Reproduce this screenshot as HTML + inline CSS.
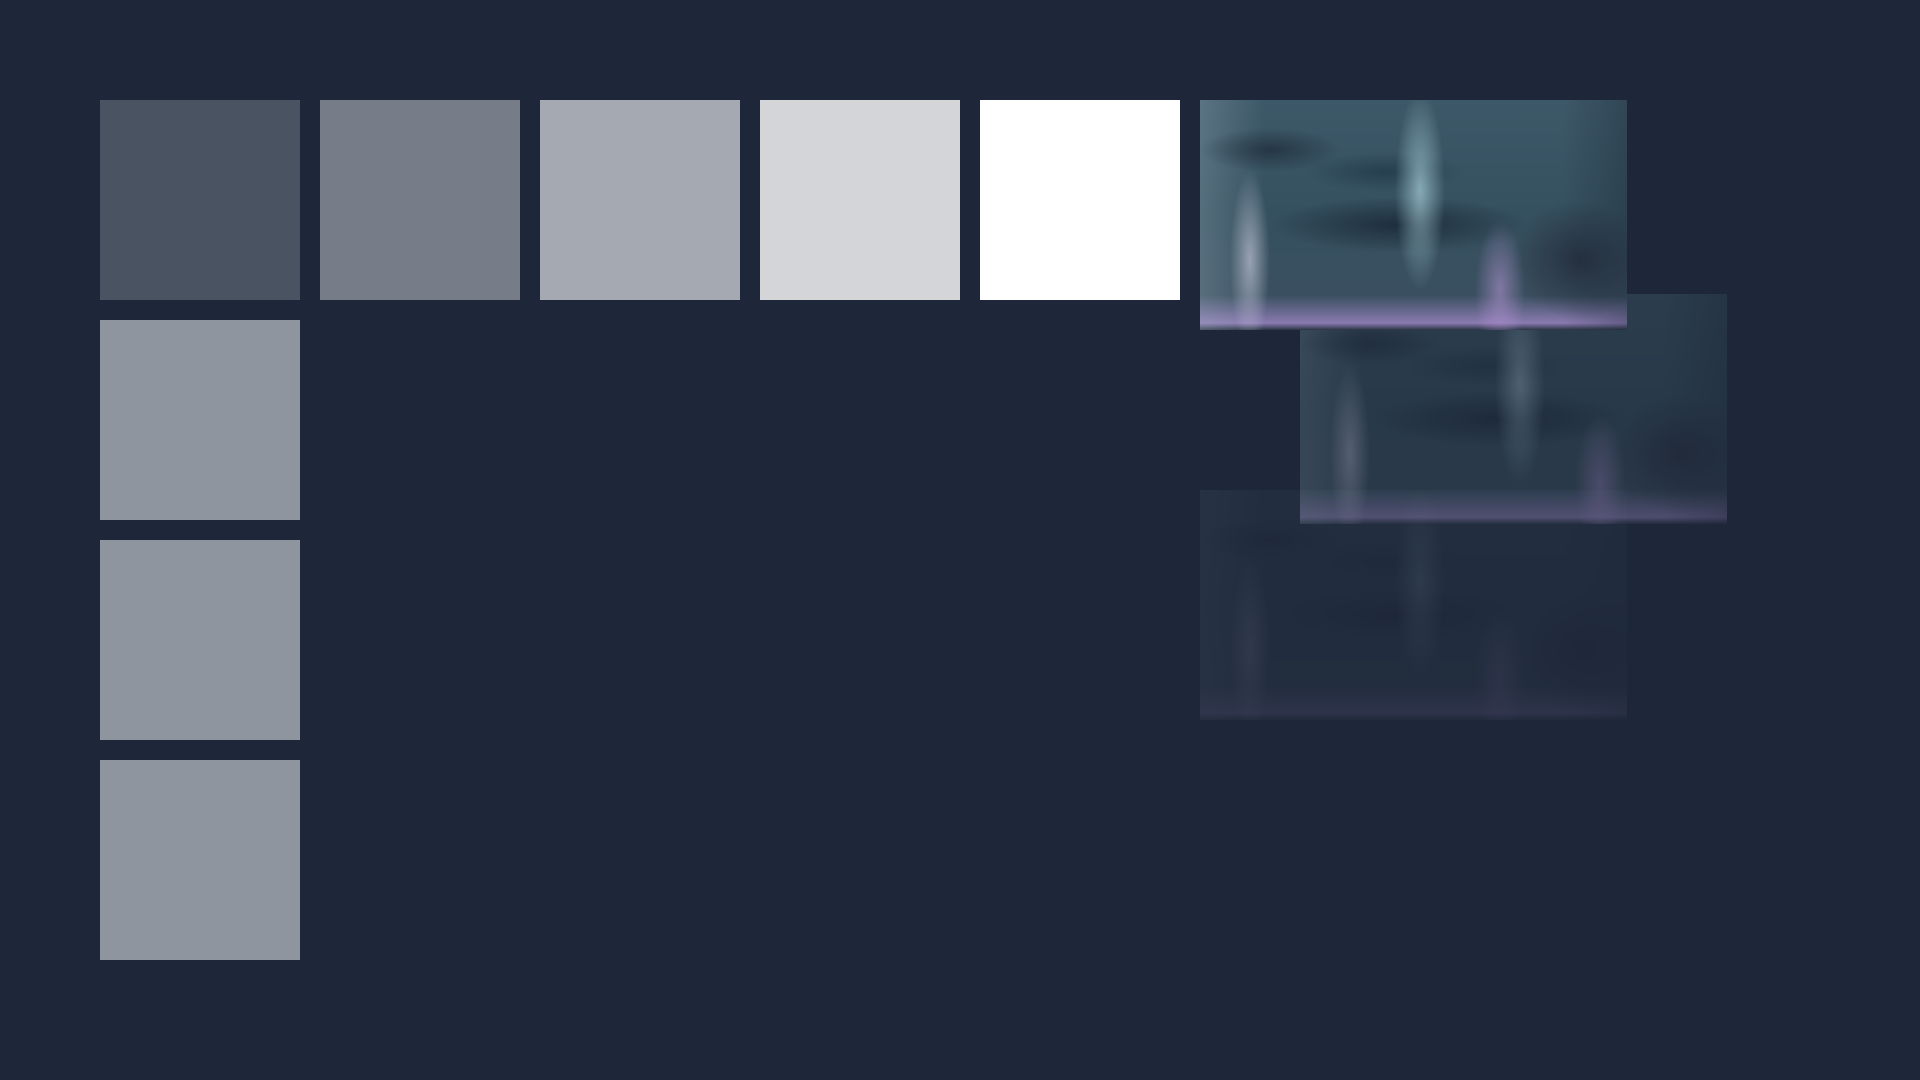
<!DOCTYPE html>
<html><head><meta charset="utf-8"><style>
html,body{margin:0;padding:0;width:1920px;height:1080px;background:#1e2739;overflow:hidden;font-family:"Liberation Sans",sans-serif}
.s{position:absolute;width:200px;height:200px}
.img{position:absolute;width:427px;height:230px;
background:
radial-gradient(ellipse 25px 100px at 220px 90px,rgba(200,240,250,.55),transparent),
radial-gradient(ellipse 20px 90px at 50px 160px,rgba(225,225,245,.55),transparent),
radial-gradient(ellipse 25px 70px at 300px 190px,rgba(200,160,230,.5),transparent),
radial-gradient(ellipse 130px 28px at 200px 125px,rgba(25,40,55,.85),transparent),
radial-gradient(ellipse 80px 20px at 185px 72px,rgba(35,60,75,.85),transparent),
radial-gradient(ellipse 70px 22px at 70px 50px,rgba(30,45,60,.75),transparent),
radial-gradient(ellipse 70px 60px at 380px 160px,rgba(30,35,50,.7),transparent),
linear-gradient(90deg,rgba(180,200,215,.25),transparent 15%,transparent 85%,rgba(20,30,45,.3)),
linear-gradient(180deg,#3d5868 0%,#35505f 50%,#3a5060 85%,#8a7ab0 97%,#2a3545 100%);}
</style></head><body>
<div class="s" style="left:100px;top:100px;background:#4a5362"></div>
<div class="s" style="left:320px;top:100px;background:#767d88"></div>
<div class="s" style="left:540px;top:100px;background:#a5a9b2"></div>
<div class="s" style="left:760px;top:100px;background:#d3d5d9"></div>
<div class="s" style="left:980px;top:100px;background:#ffffff"></div>
<div class="s" style="left:100px;top:320px;background:#8f959e"></div>
<div class="s" style="left:100px;top:540px;background:#8f959e"></div>
<div class="s" style="left:100px;top:760px;background:#8f959e"></div>
<div class="img" style="left:1200px;top:490px;opacity:.15"></div>
<div class="img" style="left:1300px;top:294px;opacity:.45"></div>
<div class="img" style="left:1200px;top:100px"></div>
</body></html>
